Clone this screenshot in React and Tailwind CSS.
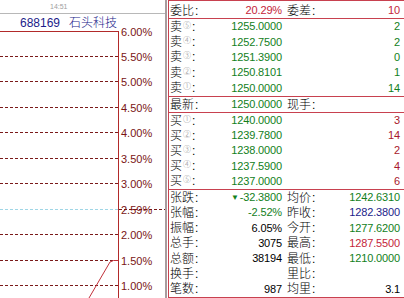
import React from "react";

const FONT = { fontFamily: '"Liberation Sans", "Noto Sans CJK SC", sans-serif' };

const sells = [
  ["⑤", "1255.0000", "2"],
  ["④", "1252.7500", "2"],
  ["③", "1251.3900", "0"],
  ["②", "1250.8101", "1"],
  ["①", "1250.0000", "14"],
];
const buys = [
  ["①", "1240.0000", "3"],
  ["②", "1239.7800", "14"],
  ["③", "1238.0000", "2"],
  ["④", "1237.5900", "4"],
  ["⑤", "1237.0000", "6"],
];
const stats = [
  ["张跌", "-32.3800", "text-[#12801c]", "均价", "1242.6310", "text-[#12801c]", true],
  ["张幅", "-2.52%", "text-[#12801c]", "昨收", "1282.3800", "text-[#1c1c8a]"],
  ["振幅", "6.05%", "text-black", "今开", "1277.6200", "text-[#12801c]"],
  ["总手", "3075", "text-black", "最高", "1287.5500", "text-[#c41e3a]"],
  ["总额", "38194", "text-black", "最低", "1210.0000", "text-[#12801c]"],
  ["换手", "", "text-black", "里比", "", "text-black"],
  ["笔数", "987", "text-black", "均里", "3.1", "text-black"],
];

const levels = ["6.00%", "5.50%", "5.00%", "4.50%", "4.00%", "3.50%", "3.00%", "2.59%", "2.00%", "1.50%", "1.00%"];
const lineY = [0.5, 25.5, 50.5, 76.5, 101.5, 127.5, 152.5, 178.5, 203.5, 229.5, 254.5];

function Label({ text, sub }) {
  return (
    <span className="flex items-center text-[12px] text-black leading-none font-light">
      {text}
      {sub && <span className="text-[8px] text-[#8c8c8c] leading-none ml-[1px] -mt-[2px]">{sub}</span>}
      <span className="ml-[1px]">:</span>
    </span>
  );
}

function Row({ l, lsub, lv, lc, r, rv, rc, tri }) {
  return (
    <div className="grid grid-cols-[115px_120px] items-center h-full">
      <div className="flex items-center justify-between pl-[1px] pr-[2px]">
        <Label text={l} sub={lsub} />
        <span className={`text-[11px] leading-none tracking-[-0.15px] flex items-center ${lc}`}>
          {tri && <span className="text-[8px] mr-[1px]">▼</span>}
          {lv}
        </span>
      </div>
      <div className="flex items-center justify-between pl-[3px] pr-[4px]">
        {r ? <Label text={r} /> : <span />}
        <span className={`text-[11px] leading-none tracking-[-0.15px] ${rc}`}>{rv}</span>
      </div>
    </div>
  );
}

function Chart() {
  return (
    <div className="w-[165px] h-[298px] flex flex-col shrink-0">
      <div className="h-[14px] border-b border-[#b8b8b8] text-[7px] leading-[13px] text-[#a0a0a0] pl-[50px]">14:51</div>
      <div className="h-[17px] pl-[20px] flex items-center text-[12px] text-[#1c1c8a] leading-none">
        <span>688169</span>
        <span className="ml-[9px] font-light">石头科技</span>
      </div>
      <div className="relative flex-1">
        <svg className="absolute inset-0" width="165" height="267" viewBox="0 0 165 267">
          <line x1="0" y1="0.5" x2="118.5" y2="0.5" stroke="#b22a2a" strokeWidth="1" />
          <line x1="118.5" y1="0" x2="118.5" y2="267" stroke="#b22a2a" strokeWidth="1" />
          {lineY.slice(1).map((y, i) =>
            i === 6 ? (
              <g key={i}>
                <line x1="0" y1={y} x2="118" y2={y} stroke="#9fd6e6" strokeWidth="1" strokeDasharray="3 2" />
                <line x1="119" y1={y} x2="165" y2={y} stroke="#7a1a1a" strokeWidth="1" strokeDasharray="3 2" />
              </g>
            ) : (
              <line key={i} x1="0" y1={y} x2="118" y2={y} stroke="#7a1a1a" strokeWidth="1" strokeDasharray="3 2" />
            )
          )}
          <polyline points="89,267 110,231 113.5,229.5 118,229.5" fill="none" stroke="#c0303a" strokeWidth="1" />
        </svg>
        {levels.map((t, i) => (
          <span
            key={t}
            className="absolute left-[121px] text-[11px] leading-[12px] text-[#7a1414]"
            style={{ top: lineY[i] - 6 }}
          >
            {t}
          </span>
        ))}
      </div>
    </div>
  );
}

export default function App() {
  return (
    <div className="w-[404px] h-[298px] bg-white flex overflow-hidden" style={FONT}>
      <Chart />
      <div className="w-[2px] h-full bg-[#a89c9e] shrink-0" />
      <div className="w-[1px] h-full shrink-0" />
      <div className="w-[236px] h-[298px] flex flex-col border-l border-[#c8414f] shrink-0">
        <div className="h-[19px] border-t border-b border-[#c8414f] pt-[2px]">
          <Row l="委比" lv="20.29%" lc="text-[#c41e3a]" r="委差" rv="10" rc="text-[#c41e3a]" />
        </div>
        <div className="h-[77px] grid grid-rows-5">
          {sells.map(([s, p, v]) => (
            <Row key={s} l="卖" lsub={s} lv={p} lc="text-[#12801c]" rv={v} rc="text-[#12801c]" />
          ))}
        </div>
        <div className="h-[17px] border-t border-b border-[#c8414f]">
          <Row l="最新" lv="1250.0000" lc="text-[#12801c]" r="现手" rv="" rc="" />
        </div>
        <div className="h-[76px] grid grid-rows-5">
          {buys.map(([s, p, v]) => (
            <Row key={s} l="买" lsub={s} lv={p} lc="text-[#12801c]" rv={v} rc="text-[#a8182c]" />
          ))}
        </div>
        <div className="h-[109px] border-t border-b border-[#c8414f] grid grid-rows-7">
          {stats.map(([l, lv, lc, r, rv, rc, tri]) => (
            <Row key={l} l={l} lv={lv} lc={lc} r={r} rv={rv} rc={rc} tri={tri} />
          ))}
        </div>
      </div>
    </div>
  );
}
